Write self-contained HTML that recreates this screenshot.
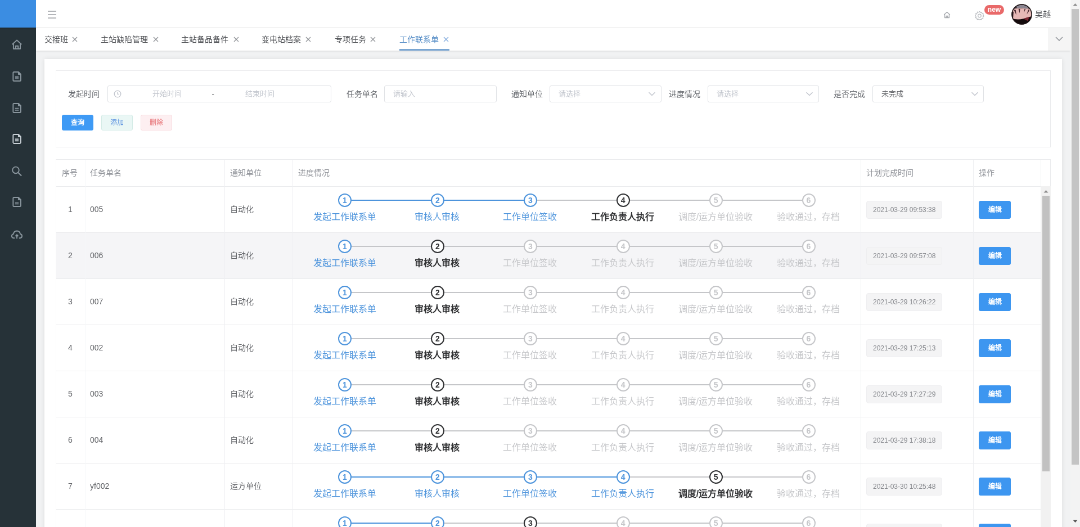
<!DOCTYPE html><html lang="zh-CN"><head><meta charset="utf-8"><style>
*{box-sizing:border-box;margin:0;padding:0}
html,body{width:1080px;height:527px;overflow:hidden;background:#fff}
body{font-family:"Liberation Sans",sans-serif;color:#606266;-webkit-font-smoothing:antialiased}
#root{position:absolute;left:0;top:0;width:1920px;height:937px;transform:scale(0.5625);transform-origin:0 0;background:#f1f2f3;overflow:hidden;will-change:transform}
.a{position:absolute}
#side{left:0;top:0;width:64px;height:937px;background:#263238}
#logo{left:0;top:0;width:64px;height:49px;background:#3b8de2}
.mi{position:absolute;left:20px;width:20px;height:20px}
#hdr{left:64px;top:0;width:1839px;height:50px;background:#fff;border-bottom:1px solid #e6e6e6}
#tabs{left:64px;top:50px;width:1839px;height:40px;background:#fff;box-shadow:0 1px 3px rgba(0,0,0,.12)}
.tab{position:absolute;top:50px;height:40px;line-height:40px;font-size:14px;color:#515357;white-space:nowrap}
.tab .x{position:absolute;top:0;font-size:15px;color:#888}
.tab.act{color:#5a90c8}
#tabdd{left:1863px;top:50px;width:40px;height:40px;background:#f5f5f5}
#psb{left:1903px;top:0;width:17px;height:937px;background:#f3f3f3}
#psb .thb{position:absolute;left:2px;top:16px;width:13px;height:810px;background:#c4c4c4}
#card{left:79px;top:105px;width:1809px;height:900px;background:#fff;box-shadow:0 0 8px rgba(0,0,0,.09)}
#filter{left:99px;top:125px;width:1769px;height:137px;border:1px solid #eaebed;border-left-color:#f6f7f9;background:#fff}
.lbl{position:absolute;font-size:14px;color:#686b70;line-height:30px;top:152px;white-space:nowrap}
.inp{position:absolute;top:152px;height:30px;border:1px solid #dfe1e5;border-radius:3px;background:#fff;font-size:13px;line-height:28px;color:#c0c4cc;white-space:nowrap}
.btn{position:absolute;top:204px;height:28px;width:56px;border-radius:3px;font-size:12px;line-height:27px;text-align:center;border:1px solid}
#tbl{left:99px;top:283px;width:1769px;height:700px;background:#fff;border-left:1px solid #f7f7f9;border-top:1px solid #eaebed;border-right:1px solid #eaebed;overflow:hidden}
.hc{position:absolute;font-size:14px;color:#909399;line-height:47px;top:0;white-space:nowrap}
.row{position:absolute;left:0;width:1750px;height:82px;border-bottom:1px solid #eaebed;background:#fff}
.row.hov{background:#f5f5f7}
.c{position:absolute;top:0;height:81px;line-height:81px;font-size:14px;color:#606266;white-space:nowrap}
.vl{position:absolute;top:0;width:1px;background:#eeeff2}
.st{position:absolute;top:0;width:165px;height:81px}
.ln{position:absolute;top:23px;left:83px;width:165px;height:2px;background:#c5c6c9}
.ln.f{background:#4d94dc}
.ic{position:absolute;left:71px;top:12px;width:24px;height:24px;border:2px solid #c5c6c9;border-radius:50%;background:#fff;font-size:14px;line-height:20px;text-align:center;color:#c5c6c9;font-weight:700}
.tt{position:absolute;left:0;top:35px;width:165px;text-align:center;font-size:16px;line-height:38px;color:#c5c6c9;white-space:nowrap}
.f .ic{border-color:#4d94dc;color:#4d94dc}
.f .tt{color:#4d94dc}
.p .ic{border-color:#303133;color:#303133}
.p .tt{color:#303133;font-weight:700}
.tag{position:absolute;white-space:nowrap;top:25px;left:10px;height:32px;line-height:30px;padding:0 11px;font-size:12px;color:#85878c;background:#f4f4f5;border:1px solid #eeeef0;border-radius:4px}
.eb{position:absolute;top:24.5px;left:10px;width:57px;height:32px;line-height:30px;text-align:center;font-size:12px;color:#fff;background:#3d96f0;border:1px solid #3d96f0;border-radius:3px;font-weight:700}
</style></head><body><div id="root">
<div id="side" class="a"><div id="logo" class="a"></div><div class="a" style="left:0;top:49px;width:64px;height:4px;background:linear-gradient(#1d272d,#263238)"></div>
<svg class="mi" style="top:68.5px" viewBox="0 0 18 18"><path d="M1.5 9 L9 2.2 L16.5 9 M3.5 7.5 V16 H14.5 V7.5 M7 16 V11.5 H11 V16" fill="none" stroke="#8a969e" stroke-width="1.7" stroke-linejoin="round"/></svg>
<svg class="mi" style="top:125.5px" viewBox="0 0 18 18"><path d="M3 3.2 Q3 1.8 4.4 1.8 H11.6 L15.2 5.4 V14.8 Q15.2 16.2 13.8 16.2 H4.4 Q3 16.2 3 14.8 Z M11.6 1.8 V5.4 H15.2" fill="none" stroke="#8a969e" stroke-width="1.7" stroke-linejoin="round"/><rect x="6.2" y="8.3" width="5.6" height="4.6" fill="#8a969e" opacity=".75"/></svg>
<svg class="mi" style="top:181.5px" viewBox="0 0 18 18"><path d="M3 3.2 Q3 1.8 4.4 1.8 H11.6 L15.2 5.4 V14.8 Q15.2 16.2 13.8 16.2 H4.4 Q3 16.2 3 14.8 Z M11.6 1.8 V5.4 H15.2" fill="none" stroke="#8a969e" stroke-width="1.7" stroke-linejoin="round"/><path d="M6 9.6 H12 M6 12.4 H12" stroke="#8a969e" stroke-width="1.6"/></svg>
<svg class="mi" style="top:236.5px" viewBox="0 0 18 18"><path d="M3 3.2 Q3 1.8 4.4 1.8 H11.6 L15.2 5.4 V14.8 Q15.2 16.2 13.8 16.2 H4.4 Q3 16.2 3 14.8 Z M11.6 1.8 V5.4 H15.2" fill="none" stroke="#c8d0d6" stroke-width="1.7" stroke-linejoin="round"/><rect x="6.2" y="8.3" width="5.6" height="4.6" fill="#c8d0d6" opacity=".75"/></svg>
<svg class="mi" style="top:293.5px" viewBox="0 0 18 18"><circle cx="7.2" cy="7.6" r="5.2" fill="none" stroke="#8a969e" stroke-width="1.7"/><path d="M11 11.4 L15.8 16.2" stroke="#8a969e" stroke-width="1.9" stroke-linecap="round"/></svg>
<svg class="mi" style="top:348.5px" viewBox="0 0 18 18"><path d="M3 3.2 Q3 1.8 4.4 1.8 H11.6 L15.2 5.4 V14.8 Q15.2 16.2 13.8 16.2 H4.4 Q3 16.2 3 14.8 Z M11.6 1.8 V5.4 H15.2" fill="none" stroke="#8a969e" stroke-width="1.7" stroke-linejoin="round"/><rect x="6.2" y="9" width="5.6" height="4" fill="#8a969e" opacity=".6"/></svg>
<svg class="mi" style="top:405.5px" viewBox="0 0 18 18"><path d="M5.5 15.5 H3.8 Q0.8 15.2 0.8 12.2 Q0.8 9.4 3.6 9 Q4 4.2 9 4 Q13.8 4.2 14.4 9 Q17.2 9.4 17.2 12.2 Q17.2 15.2 14.2 15.5 H12.5" fill="none" stroke="#8a969e" stroke-width="1.7" stroke-linejoin="round"/><path d="M9 16.5 V10.5 M6.8 12.6 L9 10.2 L11.2 12.6" fill="none" stroke="#8a969e" stroke-width="1.7"/></svg>
</div>
<div id="hdr" class="a"></div>
<svg class="a" style="left:84px;top:18px" width="17" height="16" viewBox="0 0 17 16"><path d="M1 2 H16 M1 8 H16 M1 14 H16" stroke="#9a9da2" stroke-width="1.5"/></svg>
<svg class="a" style="left:1677px;top:20px" width="13" height="13" viewBox="0 0 13 13"><path d="M1.2 6.2 L6.5 1.5 L11.8 6.2 M2.6 5.2 V11.5 H10.4 V5.2 M5.2 11.5 V8.5 H7.8 V11.5" fill="none" stroke="#a3a6ab" stroke-width="1.3" stroke-linejoin="round"/></svg>
<svg class="a" style="left:1733px;top:19px" width="17" height="17" viewBox="0 0 17 17"><path d="M8.5 1.5 L10 3.2 L12.3 2.6 L12.9 4.9 L15.2 5.6 L14.5 7.9 L16 9.5 L14.3 11 L14.8 13.3 L12.5 13.8 L11.8 16 L9.6 15.3 L8 16.6 L6.5 15 L4.2 15.6 L3.7 13.3 L1.4 12.6 L2.1 10.3 L0.6 8.6 L2.3 7.1 L1.8 4.8 L4.1 4.3 L4.8 2 L7 2.7 Z" fill="none" stroke="#b4b7bc" stroke-width="1.2" stroke-linejoin="round"/><circle cx="8.4" cy="9" r="2.8" fill="none" stroke="#b4b7bc" stroke-width="1.2"/></svg>
<div class="a" style="left:1750px;top:9px;width:35px;height:17px;border-radius:9px;background:#e96969;color:#fff;font-size:12px;font-weight:700;line-height:17px;text-align:center">new</div>
<svg class="a" style="left:1798px;top:7px" width="37" height="37" viewBox="0 0 38 38"><defs><clipPath id="av"><circle cx="19" cy="19" r="18.5"/></clipPath></defs><g clip-path="url(#av)"><rect width="38" height="38" fill="#e6b8b6"/><path d="M0 0 H38 V11 Q30 7 19 8 Q8 7 0 11 Z" fill="#3a3035"/><path d="M8 4 Q14 1 22 2 Q28 3 31 6 L28 9 Q20 6 11 8 Z" fill="#8a8590"/><path d="M4 10 L9 20 L8 11 M13 9 L15 17 L16 9 M24 9 L23 16 L26 9 M31 10 L28 19 L33 12" fill="#4a2a30"/><path d="M0 26 Q10 30 22 27 Q30 25 38 22 V38 H0 Z" fill="#140a0c"/><path d="M22 27 L33 23 L30 31 Z" fill="#7a2632"/><path d="M0 14 L4 14 L3 28 L0 28 Z" fill="#2a1a1e"/></g><circle cx="19" cy="19" r="18" fill="none" stroke="#1d1416" stroke-width="1.6"/></svg>
<div class="a" style="left:1840px;top:14px;font-size:14px;line-height:22px;color:#4a4c50">吴越</div>
<div id="tabs" class="a"></div>
<div class="tab" style="left:78.6px">交接班</div>
<svg class="a" style="left:128.3px;top:65px" width="10" height="10" viewBox="0 0 10 10"><path d="M1 1 L9 9 M9 1 L1 9" stroke="#8d9095" stroke-width="1.3"/></svg>
<div class="tab" style="left:179px">主站缺陷管理</div>
<svg class="a" style="left:271.9px;top:65px" width="10" height="10" viewBox="0 0 10 10"><path d="M1 1 L9 9 M9 1 L1 9" stroke="#8d9095" stroke-width="1.3"/></svg>
<div class="tab" style="left:322.4px">主站备品备件</div>
<svg class="a" style="left:415.1px;top:65px" width="10" height="10" viewBox="0 0 10 10"><path d="M1 1 L9 9 M9 1 L1 9" stroke="#8d9095" stroke-width="1.3"/></svg>
<div class="tab" style="left:464.8px">变电站档案</div>
<svg class="a" style="left:543.3px;top:65px" width="10" height="10" viewBox="0 0 10 10"><path d="M1 1 L9 9 M9 1 L1 9" stroke="#8d9095" stroke-width="1.3"/></svg>
<div class="tab" style="left:594.6px">专项任务</div>
<svg class="a" style="left:658px;top:65px" width="10" height="10" viewBox="0 0 10 10"><path d="M1 1 L9 9 M9 1 L1 9" stroke="#8d9095" stroke-width="1.3"/></svg>
<div class="tab act" style="left:709.6px">工作联系单</div>
<svg class="a" style="left:787.7px;top:65px" width="10" height="10" viewBox="0 0 10 10"><path d="M1 1 L9 9 M9 1 L1 9" stroke="#7fa9dc" stroke-width="1.3"/></svg>
<div class="a" style="left:710px;top:87px;width:89px;height:3px;background:#78a5d2"></div>
<div id="tabdd" class="a"><svg class="a" style="left:13px;top:15px" width="14" height="8" viewBox="0 0 14 8"><path d="M1 1 L7 7 L13 1" fill="none" stroke="#909399" stroke-width="1.5"/></svg></div>
<div id="card" class="a"></div>
<div id="filter" class="a"></div>
<div class="lbl" style="left:121px">发起时间</div>
<div class="inp" style="left:191px;width:398px"><span class="a" style="left:79px;top:0">开始时间</span><span class="a" style="left:184.5px;top:0;color:#505255">-</span><span class="a" style="left:244px;top:0">结束时间</span></div>
<svg class="a" style="left:202px;top:160px" width="14" height="14" viewBox="0 0 14 14"><circle cx="7" cy="7" r="5.8" fill="none" stroke="#c0c4cc" stroke-width="1.3"/><path d="M7 3.5 V7.3 H9.8" fill="none" stroke="#c0c4cc" stroke-width="1.3"/></svg>
<div class="lbl" style="left:616px">任务单名</div>
<div class="inp" style="left:683px;width:200px;padding-left:15px">请输入</div>
<div class="lbl" style="left:909px">通知单位</div>
<div class="inp" style="left:977px;width:199px;padding-left:15px">请选择</div>
<div class="lbl" style="left:1189px">进度情况</div>
<div class="inp" style="left:1258px;width:198px;padding-left:15px">请选择</div>
<div class="lbl" style="left:1482px">是否完成</div>
<div class="inp" style="left:1551px;width:198px;padding-left:15px;color:#606266">未完成</div>
<svg class="a" style="left:1152px;top:163px" width="14" height="8" viewBox="0 0 14 8"><path d="M1.5 1.2 L7 6.5 L12.5 1.2" fill="none" stroke="#c0c4cc" stroke-width="1.4"/></svg>
<svg class="a" style="left:1432px;top:163px" width="14" height="8" viewBox="0 0 14 8"><path d="M1.5 1.2 L7 6.5 L12.5 1.2" fill="none" stroke="#c0c4cc" stroke-width="1.4"/></svg>
<svg class="a" style="left:1726px;top:163px" width="14" height="8" viewBox="0 0 14 8"><path d="M1.5 1.2 L7 6.5 L12.5 1.2" fill="none" stroke="#c0c4cc" stroke-width="1.4"/></svg>
<div class="btn" style="left:110px;background:#3e9af5;border-color:#3e9af5;color:#fff;font-weight:700">查询</div>
<div class="btn" style="left:180px;background:#eaf7f5;border-color:#d3ebe6;color:#5b92e0">添加</div>
<div class="btn" style="left:250px;background:#fdeff1;border-color:#f8dade;color:#e66f73">删除</div>
<div id="tbl" class="a">
<div class="hc" style="left:10px">序号</div>
<div class="hc" style="left:60px">任务单名</div>
<div class="hc" style="left:309px">通知单位</div>
<div class="hc" style="left:430px">进度情况</div>
<div class="hc" style="left:1440px">计划完成时间</div>
<div class="hc" style="left:1640px">操作</div>
<div class="a" style="left:0;top:47px;width:1768px;height:1px;background:#eaebed"></div>
<div class="row" style="top:48px">
<div class="c" style="left:-1px;width:52px;text-align:center">1</div>
<div class="c" style="left:60px">005</div>
<div class="c" style="left:309px">自动化</div>
<div class="st f" style="left:430.0px">
<div class="ln f"></div>
<div class="ic">1</div><div class="tt">发起工作联系单</div></div>
<div class="st f" style="left:594.9px">
<div class="ln f"></div>
<div class="ic">2</div><div class="tt">审核人审核</div></div>
<div class="st f" style="left:759.8px">
<div class="ln"></div>
<div class="ic">3</div><div class="tt">工作单位签收</div></div>
<div class="st p" style="left:924.7px">
<div class="ln"></div>
<div class="ic">4</div><div class="tt">工作负责人执行</div></div>
<div class="st w" style="left:1089.6px">
<div class="ln"></div>
<div class="ic">5</div><div class="tt">调度/运方单位验收</div></div>
<div class="st w" style="left:1254.5px">
<div class="ic">6</div><div class="tt">验收通过，存档</div></div>
<div class="a" style="left:1430px;top:0"><div class="tag">2021-03-29 09:53:38</div></div>
<div class="a" style="left:1630px;top:0"><div class="eb">编辑</div></div>
</div>
<div class="row hov" style="top:130px">
<div class="c" style="left:-1px;width:52px;text-align:center">2</div>
<div class="c" style="left:60px">006</div>
<div class="c" style="left:309px">自动化</div>
<div class="st f" style="left:430.0px">
<div class="ln"></div>
<div class="ic">1</div><div class="tt">发起工作联系单</div></div>
<div class="st p" style="left:594.9px">
<div class="ln"></div>
<div class="ic">2</div><div class="tt">审核人审核</div></div>
<div class="st w" style="left:759.8px">
<div class="ln"></div>
<div class="ic">3</div><div class="tt">工作单位签收</div></div>
<div class="st w" style="left:924.7px">
<div class="ln"></div>
<div class="ic">4</div><div class="tt">工作负责人执行</div></div>
<div class="st w" style="left:1089.6px">
<div class="ln"></div>
<div class="ic">5</div><div class="tt">调度/运方单位验收</div></div>
<div class="st w" style="left:1254.5px">
<div class="ic">6</div><div class="tt">验收通过，存档</div></div>
<div class="a" style="left:1430px;top:0"><div class="tag">2021-03-29 09:57:08</div></div>
<div class="a" style="left:1630px;top:0"><div class="eb">编辑</div></div>
</div>
<div class="row" style="top:212px">
<div class="c" style="left:-1px;width:52px;text-align:center">3</div>
<div class="c" style="left:60px">007</div>
<div class="c" style="left:309px">自动化</div>
<div class="st f" style="left:430.0px">
<div class="ln"></div>
<div class="ic">1</div><div class="tt">发起工作联系单</div></div>
<div class="st p" style="left:594.9px">
<div class="ln"></div>
<div class="ic">2</div><div class="tt">审核人审核</div></div>
<div class="st w" style="left:759.8px">
<div class="ln"></div>
<div class="ic">3</div><div class="tt">工作单位签收</div></div>
<div class="st w" style="left:924.7px">
<div class="ln"></div>
<div class="ic">4</div><div class="tt">工作负责人执行</div></div>
<div class="st w" style="left:1089.6px">
<div class="ln"></div>
<div class="ic">5</div><div class="tt">调度/运方单位验收</div></div>
<div class="st w" style="left:1254.5px">
<div class="ic">6</div><div class="tt">验收通过，存档</div></div>
<div class="a" style="left:1430px;top:0"><div class="tag">2021-03-29 10:26:22</div></div>
<div class="a" style="left:1630px;top:0"><div class="eb">编辑</div></div>
</div>
<div class="row" style="top:294px">
<div class="c" style="left:-1px;width:52px;text-align:center">4</div>
<div class="c" style="left:60px">002</div>
<div class="c" style="left:309px">自动化</div>
<div class="st f" style="left:430.0px">
<div class="ln"></div>
<div class="ic">1</div><div class="tt">发起工作联系单</div></div>
<div class="st p" style="left:594.9px">
<div class="ln"></div>
<div class="ic">2</div><div class="tt">审核人审核</div></div>
<div class="st w" style="left:759.8px">
<div class="ln"></div>
<div class="ic">3</div><div class="tt">工作单位签收</div></div>
<div class="st w" style="left:924.7px">
<div class="ln"></div>
<div class="ic">4</div><div class="tt">工作负责人执行</div></div>
<div class="st w" style="left:1089.6px">
<div class="ln"></div>
<div class="ic">5</div><div class="tt">调度/运方单位验收</div></div>
<div class="st w" style="left:1254.5px">
<div class="ic">6</div><div class="tt">验收通过，存档</div></div>
<div class="a" style="left:1430px;top:0"><div class="tag">2021-03-29 17:25:13</div></div>
<div class="a" style="left:1630px;top:0"><div class="eb">编辑</div></div>
</div>
<div class="row" style="top:376px">
<div class="c" style="left:-1px;width:52px;text-align:center">5</div>
<div class="c" style="left:60px">003</div>
<div class="c" style="left:309px">自动化</div>
<div class="st f" style="left:430.0px">
<div class="ln"></div>
<div class="ic">1</div><div class="tt">发起工作联系单</div></div>
<div class="st p" style="left:594.9px">
<div class="ln"></div>
<div class="ic">2</div><div class="tt">审核人审核</div></div>
<div class="st w" style="left:759.8px">
<div class="ln"></div>
<div class="ic">3</div><div class="tt">工作单位签收</div></div>
<div class="st w" style="left:924.7px">
<div class="ln"></div>
<div class="ic">4</div><div class="tt">工作负责人执行</div></div>
<div class="st w" style="left:1089.6px">
<div class="ln"></div>
<div class="ic">5</div><div class="tt">调度/运方单位验收</div></div>
<div class="st w" style="left:1254.5px">
<div class="ic">6</div><div class="tt">验收通过，存档</div></div>
<div class="a" style="left:1430px;top:0"><div class="tag">2021-03-29 17:27:29</div></div>
<div class="a" style="left:1630px;top:0"><div class="eb">编辑</div></div>
</div>
<div class="row" style="top:458px">
<div class="c" style="left:-1px;width:52px;text-align:center">6</div>
<div class="c" style="left:60px">004</div>
<div class="c" style="left:309px">自动化</div>
<div class="st f" style="left:430.0px">
<div class="ln"></div>
<div class="ic">1</div><div class="tt">发起工作联系单</div></div>
<div class="st p" style="left:594.9px">
<div class="ln"></div>
<div class="ic">2</div><div class="tt">审核人审核</div></div>
<div class="st w" style="left:759.8px">
<div class="ln"></div>
<div class="ic">3</div><div class="tt">工作单位签收</div></div>
<div class="st w" style="left:924.7px">
<div class="ln"></div>
<div class="ic">4</div><div class="tt">工作负责人执行</div></div>
<div class="st w" style="left:1089.6px">
<div class="ln"></div>
<div class="ic">5</div><div class="tt">调度/运方单位验收</div></div>
<div class="st w" style="left:1254.5px">
<div class="ic">6</div><div class="tt">验收通过，存档</div></div>
<div class="a" style="left:1430px;top:0"><div class="tag">2021-03-29 17:38:18</div></div>
<div class="a" style="left:1630px;top:0"><div class="eb">编辑</div></div>
</div>
<div class="row" style="top:540px">
<div class="c" style="left:-1px;width:52px;text-align:center">7</div>
<div class="c" style="left:60px">yf002</div>
<div class="c" style="left:309px">运方单位</div>
<div class="st f" style="left:430.0px">
<div class="ln f"></div>
<div class="ic">1</div><div class="tt">发起工作联系单</div></div>
<div class="st f" style="left:594.9px">
<div class="ln f"></div>
<div class="ic">2</div><div class="tt">审核人审核</div></div>
<div class="st f" style="left:759.8px">
<div class="ln f"></div>
<div class="ic">3</div><div class="tt">工作单位签收</div></div>
<div class="st f" style="left:924.7px">
<div class="ln"></div>
<div class="ic">4</div><div class="tt">工作负责人执行</div></div>
<div class="st p" style="left:1089.6px">
<div class="ln"></div>
<div class="ic">5</div><div class="tt">调度/运方单位验收</div></div>
<div class="st w" style="left:1254.5px">
<div class="ic">6</div><div class="tt">验收通过，存档</div></div>
<div class="a" style="left:1430px;top:0"><div class="tag">2021-03-30 10:25:48</div></div>
<div class="a" style="left:1630px;top:0"><div class="eb">编辑</div></div>
</div>
<div class="row" style="top:622px">
<div class="c" style="left:-1px;width:52px;text-align:center">8</div>
<div class="c" style="left:60px">yf003</div>
<div class="c" style="left:309px">运方单位</div>
<div class="st f" style="left:430.0px">
<div class="ln f"></div>
<div class="ic">1</div><div class="tt">发起工作联系单</div></div>
<div class="st f" style="left:594.9px">
<div class="ln"></div>
<div class="ic">2</div><div class="tt">审核人审核</div></div>
<div class="st p" style="left:759.8px">
<div class="ln"></div>
<div class="ic">3</div><div class="tt">工作单位签收</div></div>
<div class="st w" style="left:924.7px">
<div class="ln"></div>
<div class="ic">4</div><div class="tt">工作负责人执行</div></div>
<div class="st w" style="left:1089.6px">
<div class="ln"></div>
<div class="ic">5</div><div class="tt">调度/运方单位验收</div></div>
<div class="st w" style="left:1254.5px">
<div class="ic">6</div><div class="tt">验收通过，存档</div></div>
<div class="a" style="left:1430px;top:0"><div class="tag">2021-03-30 10:30:00</div></div>
<div class="a" style="left:1630px;top:0"><div class="eb">编辑</div></div>
</div>
<div class="vl" style="left:51px;height:700px;background:#f5f6f8"></div>
<div class="vl" style="left:299px;height:700px"></div>
<div class="vl" style="left:420px;height:700px"></div>
<div class="vl" style="left:1430px;height:700px"></div>
<div class="vl" style="left:1630px;height:700px"></div>
<div class="vl" style="left:1750px;height:700px"></div>
</div>
<div id="psb" class="a"><div class="thb"></div><svg class="a" style="left:4px;top:5px" width="9" height="6" viewBox="0 0 9 6"><path d="M0.5 5.5 L4.5 1 L8.5 5.5 Z" fill="#8d8d8d"/></svg><svg class="a" style="left:4px;top:924px" width="9" height="6" viewBox="0 0 9 6"><path d="M0.5 0.5 L4.5 5 L8.5 0.5 Z" fill="#505050"/></svg></div>
<div class="a" style="left:1851px;top:331px;width:17px;height:620px;background:#f1f1f1"><div class="a" style="left:2px;top:17px;width:13px;height:490px;background:#c1c1c1"></div><svg class="a" style="left:4px;top:6px" width="9" height="6" viewBox="0 0 9 6"><path d="M0.5 5.5 L4.5 1 L8.5 5.5 Z" fill="#8d8d8d"/></svg></div>
</div></body></html>
